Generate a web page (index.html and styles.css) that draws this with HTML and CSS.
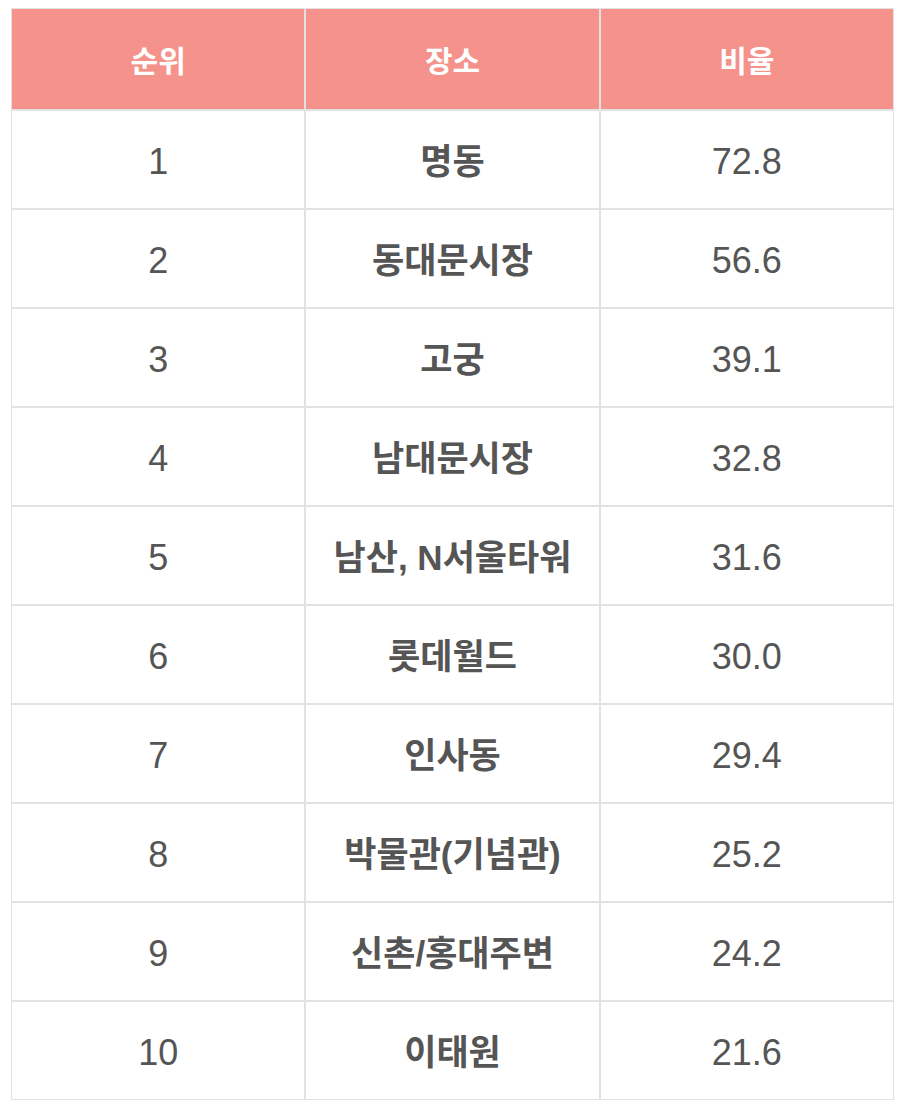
FILE: index.html
```html
<!DOCTYPE html>
<html lang="ko">
<head>
<meta charset="utf-8">
<title>순위</title>
<link rel="stylesheet" href="styles.css">
</head>
<body>
<div class="wrap">
<table class="rank">
<thead>
<tr><th>순위</th><th>장소</th><th>비율</th></tr>
</thead>
<tbody>
<tr><td class="num">1</td><td class="place">명동</td><td class="num">72.8</td></tr>
<tr><td class="num">2</td><td class="place">동대문시장</td><td class="num">56.6</td></tr>
<tr><td class="num">3</td><td class="place">고궁</td><td class="num">39.1</td></tr>
<tr><td class="num">4</td><td class="place">남대문시장</td><td class="num">32.8</td></tr>
<tr><td class="num">5</td><td class="place">남산, N서울타워</td><td class="num">31.6</td></tr>
<tr><td class="num">6</td><td class="place">롯데월드</td><td class="num">30.0</td></tr>
<tr><td class="num">7</td><td class="place">인사동</td><td class="num">29.4</td></tr>
<tr><td class="num">8</td><td class="place">박물관(기념관)</td><td class="num">25.2</td></tr>
<tr><td class="num">9</td><td class="place">신촌/홍대주변</td><td class="num">24.2</td></tr>
<tr><td class="num">10</td><td class="place">이태원</td><td class="num">21.6</td></tr>
</tbody>
</table>
</div>
</body>
</html>
```

FILE: styles.css
```css
html, body {
  margin: 0;
  padding: 0;
  background: #ffffff;
}

.wrap {
  padding: 8px 0 0 11px;
}

.rank {
  width: 883px;
  border-collapse: separate;
  border-spacing: 0;
  table-layout: fixed;
  font-family: "Liberation Sans", "Noto Sans CJK KR", sans-serif;
}

.rank th,
.rank td {
  border: 1px solid #e2e2e2;
  padding: 0;
  text-align: center;
  vertical-align: middle;
}

.rank th {
  height: 100px;
  background: #f5928b;
  color: #ffffff;
  font-size: 30px;
  font-weight: 700;
}

.rank td {
  color: #555555;
  line-height: 1;
  padding-top: 4px;
  height: 93px;
}

.rank td.num {
  font-size: 36px;
  font-weight: 400;
}

.rank td.place {
  font-size: 35px;
  font-weight: 700;
}
```
